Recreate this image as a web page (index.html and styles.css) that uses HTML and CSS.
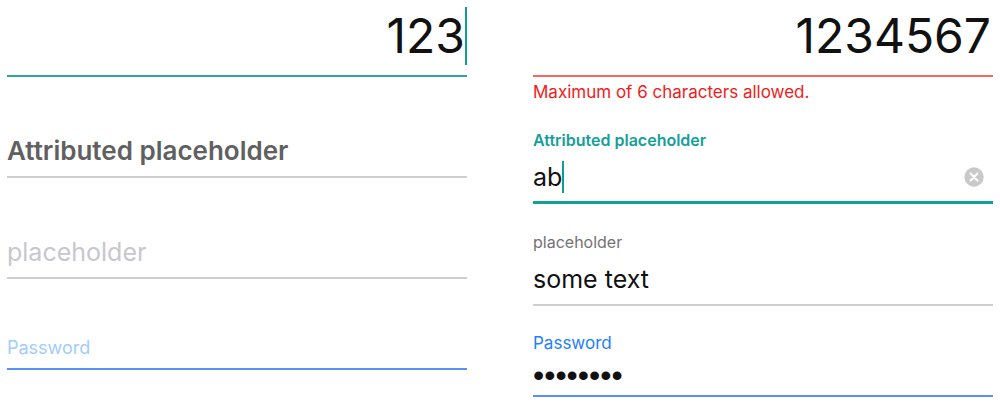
FILE: index.html
```html
<!DOCTYPE html>
<html lang="en">
<head>
<meta charset="utf-8">
<title>Text fields</title>
<link rel="stylesheet" href="styles.css">
</head>
<body>
<main class="columns">
  <form class="column column-empty">
    <div class="field teal amount">
      <div class="row"><input class="input" type="text" value="123" aria-label="Number"><span class="caret"></span></div>
    </div>
    <div class="field">
      <div class="row"><input class="input strong" type="text" placeholder="Attributed placeholder" aria-label="Attributed placeholder"></div>
    </div>
    <div class="field">
      <div class="row"><input class="input" type="text" placeholder="placeholder" aria-label="placeholder"></div>
    </div>
    <div class="field blue compact">
      <div class="row"><input class="input" type="password" placeholder="Password" aria-label="Password"></div>
    </div>
  </form>
  <form class="column column-filled">
    <div class="field red amount">
      <div class="row"><input class="input" id="limited" type="text" value="1234567" aria-label="Number" aria-describedby="limit-error"></div>
    </div>
    <p class="error" id="limit-error">Maximum of 6 characters allowed.</p>
    <div class="field teal titled thick">
      <label class="label strong" for="attributed">Attributed placeholder</label>
      <div class="row">
        <input class="input fit" id="attributed" type="text" value="ab"><span class="caret"></span>
        <button class="clear" type="button" aria-label="Clear text">
          <svg class="clear-icon" viewBox="0 0 20 20" aria-hidden="true"><circle cx="10" cy="10" r="9.7" fill="#c9c9c9"/><path d="M6.5 6.5l7 7M13.5 6.5l-7 7" stroke="#fff" stroke-width="2" stroke-linecap="round"/></svg>
        </button>
      </div>
    </div>
    <div class="field titled">
      <label class="label" for="plain">placeholder</label>
      <div class="row"><input class="input" id="plain" type="text" value="some text"></div>
    </div>
    <div class="field blue secret">
      <label class="label" for="password">Password</label>
      <div class="row"><input class="input" id="password" type="password" value="password"></div>
    </div>
  </form>
</main>
</body>
</html>
```
FILE: styles.css
```css
* {
  box-sizing: border-box;
}

body {
  margin: 0;
  background: #fff;
  color: #111;
  font-family: Inter, "Liberation Sans", sans-serif;
}

.columns {
  display: grid;
  grid-template-columns: repeat(2, minmax(0, 1fr));
  gap: 66px;
  padding: 0 7px;
}

.column {
  display: flex;
  flex-direction: column;
}

.column-empty {
  gap: 49px;
}

.field {
  --accent: #cfcfcf;
  border-bottom: 2px solid var(--accent);
}

.teal {
  --accent: #2fa49b;
}

.red {
  --accent: #fa6464;
}

.blue {
  --accent: #5a90fb;
}

.thick {
  --accent: #0fa097;
  border-bottom-width: 3px;
}

.row {
  display: flex;
  align-items: center;
  height: 50px;
}

.input {
  flex: 1;
  min-width: 0;
  padding: 0;
  border: 0;
  outline: 0;
  background: none;
  color: #111;
  font: 400 25px/32px Inter, "Liberation Sans", sans-serif;
}

.input::placeholder {
  color: #c7c7cc;
  opacity: 1;
}

.input.strong {
  font-size: 26px;
}

.input.strong::placeholder {
  color: #606060;
  font-weight: 600;
}

.fit {
  flex: none;
  field-sizing: content;
}

.caret {
  width: 2px;
  height: 32px;
  background: #0f9d94;
}

.amount .row {
  height: 75px;
  padding-bottom: 3px;
}

.amount .input {
  font-size: 48px;
  line-height: 58px;
  text-align: right;
}

.amount .caret {
  height: 58px;
}

.red .input {
  padding-right: 2px;
}

.compact .row {
  height: 40px;
}

.compact .input {
  font-size: 18px;
  line-height: 24px;
}

.compact .input::placeholder {
  color: #a0cdff;
}

.label {
  display: block;
  color: #737373;
  font-size: 16px;
  line-height: 20px;
}

.label.strong {
  font-weight: 600;
}

.teal .label {
  color: #14a098;
}

.blue .label {
  color: #2080ff;
  font-size: 17px;
}

.error {
  margin: 5px 0 28px;
  color: #f01c20;
  font-size: 17px;
  line-height: 20px;
}

.clear {
  display: flex;
  margin-left: auto;
  margin-right: 9px;
  padding: 0;
  border: 0;
  background: none;
}

.clear-icon {
  width: 20px;
  height: 20px;
}

.titled {
  margin-bottom: 27px;
}

.titled .row {
  height: 52px;
  padding-top: 2px;
}

.titled.thick {
  margin-bottom: 28px;
}

.thick .row {
  height: 51px;
}

.secret .row {
  height: 42px;
  padding-top: 2px;
}

.secret .input {
  font-family: "Liberation Sans", sans-serif;
  font-size: 32px;
}
```
